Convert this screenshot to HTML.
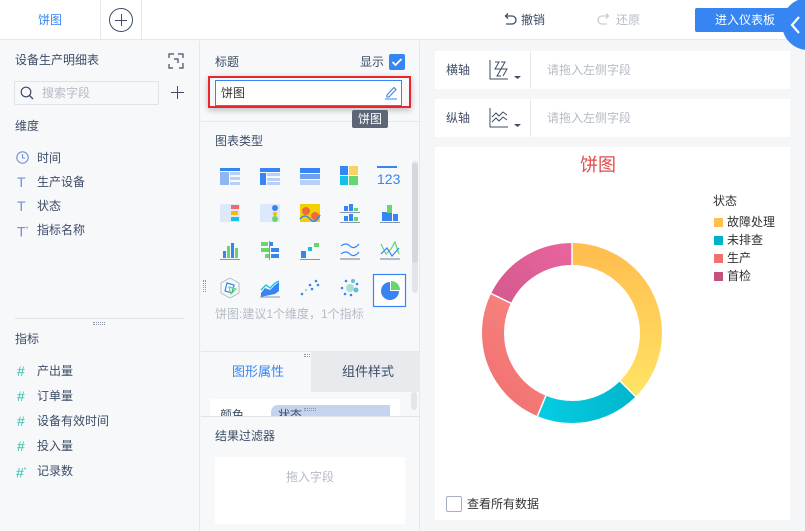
<!DOCTYPE html>
<html><head><meta charset="utf-8"><style>
*{margin:0;padding:0;box-sizing:border-box}
body{width:805px;height:531px;overflow:hidden;position:relative;background:#f5f6f8;font-family:"Liberation Sans","Noto Sans CJK SC",sans-serif;font-size:12px;color:#3d4d66}
.a{position:absolute;white-space:nowrap}
.t{line-height:16px}
</style></head><body>
<!-- top bar -->
<div class="a" style="left:0;top:0;width:805px;height:40px;background:#fff;border-bottom:1px solid #e6e8ec"></div>
<div class="a t" style="left:38px;top:12px;color:#3685f2">饼图</div>
<div class="a" style="left:100px;top:0;width:1px;height:40px;background:#e6e8ec"></div>
<div class="a" style="left:141px;top:0;width:1px;height:40px;background:#e6e8ec"></div>
<div class="a" style="left:109px;top:8px;width:24px;height:24px;border:1.2px solid #3d4d66;border-radius:50%"></div>
<div class="a" style="left:115px;top:19.5px;width:12px;height:1.3px;background:#3d4d66"></div>
<div class="a" style="left:120.5px;top:14px;width:1.3px;height:12px;background:#3d4d66"></div>
<svg class="a" style="left:502px;top:12px" width="16" height="16" viewBox="0 0 16 16"><path d="M4 4h6a4 4 0 0 1 0 8H4M6 1.5L3.5 4L6 6.5" fill="none" stroke="#3d4d66" stroke-width="1.3"/></svg>
<div class="a t" style="left:521px;top:12px;color:#3d4d66">撤销</div>
<svg class="a" style="left:596px;top:12px" width="16" height="16" viewBox="0 0 16 16"><path d="M12 4H6a4 4 0 0 0 0 8h5M10 1.5L12.5 4L10 6.5" fill="none" stroke="#c9ced6" stroke-width="1.3"/></svg>
<div class="a t" style="left:616px;top:12px;color:#b5bbc5">还原</div>
<div class="a" style="left:695px;top:8px;width:95px;height:24px;background:#3685f2;border-radius:2px;color:#fff;line-height:24px;text-indent:20px">进入仪表板</div>
<div class="a" style="left:782px;top:-2px;width:52px;height:52px;border-radius:50%;background:#3685f2"></div>
<svg class="a" style="left:789px;top:15px" width="14" height="20" viewBox="0 0 14 20"><path d="M10 2L3 10L10 18" fill="none" stroke="#fff" stroke-width="2.2"/></svg>

<!-- left panel -->
<div class="a" style="left:0;top:41px;width:200px;height:490px;background:#f7f8fa;border-right:1px solid #e6e8ec"></div>
<div class="a t" style="left:15px;top:52px">设备生产明细表</div>
<svg class="a" style="left:168px;top:53px" width="16" height="16" viewBox="0 0 16 16"><path d="M1 5V1h5M10 1h5v4M15 10v5h-4M5 15H1v-4M6 6h4v4" fill="none" stroke="#3d4d66" stroke-width="1.2"/></svg>
<div class="a" style="left:14px;top:81px;width:145px;height:24px;border:1px solid #dfe2e7;border-radius:2px;background:#f7f8fa"></div>
<svg class="a" style="left:20px;top:86px" width="14" height="14" viewBox="0 0 14 14"><circle cx="6" cy="6" r="4.8" fill="none" stroke="#3d4d66" stroke-width="1.2"/><path d="M9.5 9.5L13 13" stroke="#3d4d66" stroke-width="1.3"/></svg>
<div class="a t" style="left:42px;top:85px;color:#b5bbc5">搜索字段</div>
<div class="a" style="left:171px;top:92px;width:13px;height:1.4px;background:#3d4d66"></div>
<div class="a" style="left:177px;top:86px;width:1.4px;height:13px;background:#3d4d66"></div>
<div class="a t" style="left:15px;top:118px">维度</div>
<svg class="a" style="left:16px;top:151px" width="13" height="13" viewBox="0 0 13 13"><circle cx="6.5" cy="6.5" r="5.7" fill="none" stroke="#6f8fd8" stroke-width="1.1"/><path d="M6.5 3v4h2.5" fill="none" stroke="#6f8fd8" stroke-width="1.1"/></svg>
<div class="a t" style="left:37px;top:150px">时间</div>
<div class="a t" style="left:17px;top:174px;color:#6f8fd8;font-size:14px">T</div>
<div class="a t" style="left:37px;top:174px">生产设备</div>
<div class="a t" style="left:17px;top:198px;color:#6f8fd8;font-size:14px">T</div>
<div class="a t" style="left:37px;top:198px">状态</div>
<div class="a t" style="left:17px;top:222px;color:#6f8fd8;font-size:14px">T<sup style="font-size:7px">*</sup></div>
<div class="a t" style="left:37px;top:222px">指标名称</div>
<div class="a" style="left:15px;top:318px;width:169px;height:1px;background:#e1e3e8"></div>
<div class="a" style="left:93px;top:322px;width:12px;height:3px;border-top:1px dotted #8a94a6;border-bottom:1px dotted #8a94a6"></div>
<div class="a t" style="left:15px;top:331px">指标</div>
<div class="a t" style="left:17px;top:363px;color:#2dbfae;font-size:14px">#</div><div class="a t" style="left:37px;top:363px">产出量</div>
<div class="a t" style="left:17px;top:388px;color:#2dbfae;font-size:14px">#</div><div class="a t" style="left:37px;top:388px">订单量</div>
<div class="a t" style="left:17px;top:413px;color:#2dbfae;font-size:14px">#</div><div class="a t" style="left:37px;top:413px">设备有效时间</div>
<div class="a t" style="left:17px;top:438px;color:#2dbfae;font-size:14px">#</div><div class="a t" style="left:37px;top:438px">投入量</div>
<div class="a t" style="left:16px;top:463px;color:#2dbfae;font-size:14px">#<sup style="font-size:7px">*</sup></div><div class="a t" style="left:37px;top:463px">记录数</div>

<!-- middle panel -->
<div class="a" style="left:201px;top:41px;width:219px;height:490px;background:#f7f8fa;border-right:1px solid #e6e8ec"></div>
<div class="a t" style="left:215px;top:54px">标题</div>
<div class="a t" style="left:360px;top:54px">显示</div>
<div class="a" style="left:389px;top:54px;width:16px;height:16px;background:#3685f2;border-radius:2px"></div>
<svg class="a" style="left:389px;top:54px" width="16" height="16"><path d="M3.5 8l3 3l6-6" fill="none" stroke="#fff" stroke-width="1.8"/></svg>
<div class="a" style="left:201px;top:121px;width:219px;height:1px;background:#e6e8ec"></div>
<div class="a" style="left:208px;top:76px;width:203px;height:32px;border:2px solid #e8262b;box-shadow:0 2px 6px rgba(0,0,0,.25)"></div>
<div class="a" style="left:215px;top:80px;width:187px;height:26px;border:1px solid #3685f2;background:#fff"></div>
<div class="a t" style="left:221px;top:85px;color:#333">饼图</div>
<svg class="a" style="left:384px;top:84px" width="14" height="16" viewBox="0 0 14 16"><path d="M3 11L10 3.5l2 2L5 13H3zM1 15h12" fill="none" stroke="#3685f2" stroke-width="1.1"/></svg>
<div class="a" style="left:352px;top:110px;width:36px;height:18px;background:#5c6675;color:#fff;line-height:18px;text-align:center;border-radius:2px">饼图</div>
<div class="a t" style="left:215px;top:133px">图表类型</div>
<div class="a" style="left:412px;top:161px;width:6px;height:132px;background:#e3e5ea;border-radius:3px"></div>
<div class="a" style="left:412px;top:163px;width:6px;height:100px;background:#d4d7dd;border-radius:3px"></div>
<svg class="a" style="left:205px;top:160px" width="205" height="150">
<!-- row1 -->
<g transform="translate(15,8)"><rect width="20" height="3" fill="#3685f2"/><rect y="4" width="9" height="13" fill="#8fb6f0"/><rect x="10" y="4" width="10" height="3" fill="#b7d0f5"/><rect x="10" y="9" width="10" height="3" fill="#b7d0f5"/><rect x="10" y="14" width="10" height="3" fill="#b7d0f5"/></g>
<g transform="translate(55,8)"><rect width="20" height="4" fill="#3685f2"/><rect y="5" width="6" height="12" fill="#3685f2"/><rect x="7" y="5" width="13" height="3" fill="#b7d0f5"/><rect x="7" y="10" width="13" height="3" fill="#b7d0f5"/><rect x="7" y="14" width="13" height="3" fill="#b7d0f5"/></g>
<g transform="translate(95,8)"><rect width="20" height="5" fill="#3685f2"/><rect y="6" width="20" height="5" fill="#6ea0f0"/><rect y="12" width="20" height="5" fill="#b7d0f5"/></g>
<g transform="translate(135,6)"><rect width="8" height="9" fill="#3685f2"/><rect x="9" width="9" height="9" fill="#fbb800" opacity=".6"/><rect y="10" width="8" height="9" fill="#13c2e3"/><rect x="9" y="10" width="9" height="9" fill="#66d66f"/></g>
<text x="172" y="24" font-family="Liberation Sans" font-size="14" fill="#3685f2">123</text><rect x="172" y="6" width="20" height="2" fill="#3685f2"/>
<!-- row2 -->
<g transform="translate(15,44)"><rect width="20" height="18" fill="#dde8fa"/><rect x="11" y="1" width="8" height="4" fill="#f06a6a"/><rect x="11" y="7" width="7" height="4" fill="#fbb800"/><rect x="11" y="13" width="8" height="4" fill="#13c2e3"/></g>
<g transform="translate(55,44)"><rect width="20" height="18" fill="#dde8fa"/><circle cx="15" cy="4" r="3" fill="#3685f2"/><circle cx="15" cy="10" r="2" fill="#fbb800"/><circle cx="15" cy="15" r="3" fill="#66d66f"/></g>
<g transform="translate(95,44)"><rect width="20" height="18" fill="#f5d000"/><circle cx="6" cy="7" r="4" fill="#f06a3a"/><circle cx="15" cy="12" r="4" fill="#f06a3a"/><path d="M0 15q5-6 10 0t10-4" stroke="#3685f2" stroke-width="1.5" fill="none"/></g>
<g transform="translate(135,44)"><rect x="4" y="2" width="4" height="5" fill="#3685f2"/><rect x="9" width="4" height="7" fill="#3685f2"/><rect x="14" y="4" width="4" height="3" fill="#66d66f"/><rect y="8" width="20" height="1" fill="#8a94a6"/><rect x="4" y="12" width="4" height="5" fill="#3685f2"/><rect x="9" y="10" width="4" height="7" fill="#3685f2"/><rect x="14" y="13" width="4" height="4" fill="#66d66f"/><rect y="18" width="20" height="1" fill="#8a94a6"/></g>
<g transform="translate(175,44)"><rect x="2" y="8" width="5" height="9" fill="#3685f2"/><rect x="7" y="1" width="5" height="16" fill="#66d66f"/><rect x="7" y="9" width="5" height="8" fill="#3685f2"/><rect x="13" y="10" width="5" height="7" fill="#3685f2"/><rect y="18" width="20" height="1" fill="#8a94a6"/></g>
<!-- row3 -->
<g transform="translate(15,81)"><rect x="3" y="10" width="3" height="7" fill="#3685f2"/><rect x="7" y="5" width="3" height="12" fill="#66d66f"/><rect x="11" y="2" width="3" height="15" fill="#3685f2"/><rect x="15" y="7" width="3" height="10" fill="#66d66f"/><rect y="18" width="20" height="1" fill="#8a94a6"/></g>
<g transform="translate(55,81)"><rect x="1" y="1" width="7" height="4" fill="#66d66f"/><rect x="1" y="7" width="8" height="4" fill="#66d66f"/><rect x="10" y="1" width="3" height="4" fill="#3685f2"/><rect x="11" y="7" width="8" height="4" fill="#3685f2"/><rect x="11" y="13" width="8" height="4" fill="#3685f2"/><rect x="9" y="0" width="1" height="19" fill="#8a94a6"/><rect x="5" y="13" width="4" height="4" fill="#66d66f"/></g>
<g transform="translate(95,81)"><rect x="1" y="10" width="5" height="7" fill="#3685f2"/><rect x="8" y="6" width="4" height="4" fill="#13c2e3"/><rect x="14" y="2" width="5" height="4" fill="#66d66f"/><rect y="18" width="20" height="1" fill="#8a94a6"/></g>
<g transform="translate(135,81)" fill="none" stroke="#3685f2" stroke-width="1.2"><path d="M1 5q5-4 9 0t9-2"/><path d="M1 13q5-4 9 0t9-2"/><path d="M0 18h20" stroke="#8a94a6"/></g>
<g transform="translate(175,81)" fill="none" stroke-width="1.2"><path d="M1 3l5 10 5-5 4-7 4 12" stroke="#66d66f"/><path d="M1 13l6-6 5 8 7-8" stroke="#3685f2"/><path d="M0 18h20" stroke="#8a94a6"/></g>
<!-- row4 -->
<g transform="translate(15,118)"><polygon points="10,0 19,5 19,15 10,20 1,15 1,5" fill="none" stroke="#b5bbc5" stroke-width="1"/><polygon points="7,5 14,7 12,15 5,13" fill="none" stroke="#3685f2" stroke-width="1.2"/><polygon points="9,9 16,11 11,16" fill="none" stroke="#66d66f" stroke-width="1.2"/></g>
<g transform="translate(55,118)"><path d="M1 15l4-5 5 2 5-5 4-3v9l-4 3-5 1-5 1-4 1z" fill="#3685f2"/><path d="M1 12l5-5 4 3 5-5 4-2" fill="none" stroke="#13c2e3" stroke-width="1.3"/><path d="M0 19h20" stroke="#8a94a6"/></g>
<g transform="translate(95,118)" fill="#3685f2"><circle cx="2" cy="16" r="1.3"/><circle cx="6" cy="12" r="1.3" fill="#9ee0c8"/><circle cx="10" cy="7" r="1.3"/><circle cx="12" cy="11" r="1.3"/><circle cx="16" cy="3" r="1.3"/><circle cx="18" cy="7" r="1.3"/></g>
<g transform="translate(135,118)"><circle cx="10" cy="10" r="4" fill="#a8e0d0"/><circle cx="16" cy="12" r="2.5" fill="#66bcd8"/><circle cx="13" cy="3" r="2" fill="#66bcd8"/><circle cx="6" cy="3" r="1.3" fill="#3685f2"/><circle cx="2" cy="10" r="1.3" fill="#3685f2"/><circle cx="5" cy="16" r="1.3" fill="#3685f2"/><circle cx="11" cy="17" r="1.3" fill="#3685f2"/><circle cx="17" cy="6" r="1.3" fill="#3685f2"/></g>
<rect x="168.5" y="114.5" width="32" height="32" fill="#fff" stroke="#3685f2" stroke-width="1.2"/>
<g transform="translate(185,131)"><path d="M0-9A9 9 0 1 0 9 0H0z" fill="#3685f2"/><path d="M1-10A9 9 0 0 1 10-1H1z" fill="#66d66f"/></g>
</svg>
<div class="a" style="left:203px;top:280px;width:3px;height:12px;border-left:1px dotted #8a94a6;border-right:1px dotted #8a94a6"></div>
<div class="a t" style="left:215px;top:306px;color:#b5bbc5">饼图:建议1个维度，1个指标</div>
<div class="a" style="left:201px;top:351px;width:219px;height:1px;background:#e6e8ec"></div>
<div class="a" style="left:304px;top:354px;width:12px;height:3px;border-top:1px dotted #8a94a6;border-bottom:1px dotted #8a94a6"></div>
<div class="a" style="left:311px;top:352px;width:109px;height:40px;background:#e8eaee"></div>
<div class="a t" style="left:232px;top:364px;color:#3685f2;font-size:13px">图形属性</div>
<div class="a t" style="left:342px;top:364px;font-size:13px">组件样式</div>
<div class="a" style="left:210px;top:399px;width:190px;height:17px;background:#fff;overflow:hidden"><div class="a t" style="left:10px;top:8px">颜色</div><div class="a" style="left:61px;top:6px;width:119px;height:14px;background:#c5d3ec;border-radius:7px 0 0 0"></div><div class="a t" style="left:68px;top:8px">状态</div></div>
<div class="a" style="left:411px;top:392px;width:6px;height:18px;background:#e3e5ea;border-radius:3px"></div>
<div class="a" style="left:201px;top:416px;width:219px;height:1px;background:#e1e3e8"></div>
<div class="a" style="left:304px;top:408px;width:12px;height:3px;border-top:1px dotted #8a94a6;border-bottom:1px dotted #8a94a6"></div>
<div class="a t" style="left:215px;top:428px">结果过滤器</div>
<div class="a" style="left:215px;top:457px;width:190px;height:67px;background:#fff"></div>
<div class="a t" style="left:286px;top:469px;color:#b5bbc5">拖入字段</div>

<!-- right -->
<div class="a" style="left:435px;top:51px;width:355px;height:38px;background:#fff"></div>
<div class="a" style="left:435px;top:99px;width:355px;height:38px;background:#fff"></div>
<div class="a" style="left:530px;top:51px;width:1px;height:38px;background:#e6e8ec"></div>
<div class="a" style="left:530px;top:99px;width:1px;height:38px;background:#e6e8ec"></div>
<div class="a t" style="left:446px;top:62px">横轴</div>
<div class="a t" style="left:446px;top:110px">纵轴</div>
<div class="a t" style="left:547px;top:62px;color:#b5bbc5">请拖入左侧字段</div>
<div class="a t" style="left:547px;top:110px;color:#b5bbc5">请拖入左侧字段</div>
<svg class="a" style="left:489px;top:60px" width="34" height="20"><path d="M1 0v19h18M6 2h4l-4 7 6 0-4 7h4M12 2h4l-4 7 6 0-4 7" fill="none" stroke="#3d4d66" stroke-width="1"/><path d="M25 16h7l-3.5 3z" fill="#3d4d66"/></svg>
<svg class="a" style="left:489px;top:108px" width="34" height="20"><path d="M1 0v19h18M3 9l4-4 3 3 4-4 4 3M3 14l4-4 3 3 4-4 4 3" fill="none" stroke="#3d4d66" stroke-width="1"/><path d="M25 16h7l-3.5 3z" fill="#3d4d66"/></svg>
<div class="a" style="left:435px;top:147px;width:355px;height:373px;background:#fff"></div>
<div class="a" style="left:580px;top:154px;color:#e04a4a;font-size:18px;line-height:22px">饼图</div>
<svg class="a" style="left:472px;top:233px" width="200" height="200" viewBox="0 0 200 200">
<defs>
<linearGradient id="gy" x1="0" y1="0" x2="1" y2="0"><stop offset="0" stop-color="#ffe866"/><stop offset="1" stop-color="#ffbf50"/></linearGradient>
<linearGradient id="gc" x1="0" y1="0" x2="0" y2="1"><stop offset="0" stop-color="#08d8ee"/><stop offset="1" stop-color="#00b2c8"/></linearGradient>
<linearGradient id="gp" x1="0" y1="0" x2="1" y2="1"><stop offset="0" stop-color="#f07070"/><stop offset="1" stop-color="#ff9a90"/></linearGradient>
<linearGradient id="gm" x1="0" y1="0" x2="1" y2="1"><stop offset="0" stop-color="#c2517e"/><stop offset="1" stop-color="#f46aa8"/></linearGradient>
</defs>
<g transform="rotate(-90 100 100)" fill="none" stroke-width="22">
<circle cx="100" cy="100" r="79" stroke="url(#gy)" stroke-dasharray="186.1 400"/>
<circle cx="100" cy="100" r="79" stroke="url(#gc)" stroke-dasharray="0 186.1 93.2 400"/>
<circle cx="100" cy="100" r="79" stroke="url(#gp)" stroke-dasharray="0 279.3 128.8 400"/>
<circle cx="100" cy="100" r="79" stroke="url(#gm)" stroke-dasharray="0 408.1 88.3 400"/>
</g>
<g stroke="#fff" stroke-width="1.5"><line x1="100" y1="100" x2="100" y2="5" transform="rotate(0 100 100)"/><line x1="100" y1="32" x2="100" y2="5" transform="rotate(135 100 100)"/><line x1="100" y1="32" x2="100" y2="5" transform="rotate(202.6 100 100)"/><line x1="100" y1="32" x2="100" y2="5" transform="rotate(296 100 100)"/></g>
<circle cx="100" cy="100" r="67.5" fill="#fff"/>
</svg>
<div class="a t" style="left:713px;top:193px;color:#333">状态</div>
<div class="a" style="left:714px;top:218px;width:9px;height:9px;background:#ffbf50"></div><div class="a t" style="left:727px;top:214px;color:#333">故障处理</div>
<div class="a" style="left:714px;top:236px;width:9px;height:9px;background:#00b2c8"></div><div class="a t" style="left:727px;top:232px;color:#333">未排查</div>
<div class="a" style="left:714px;top:254px;width:9px;height:9px;background:#f07070"></div><div class="a t" style="left:727px;top:250px;color:#333">生产</div>
<div class="a" style="left:714px;top:272px;width:9px;height:9px;background:#c2517e"></div><div class="a t" style="left:727px;top:268px;color:#333">首检</div>
<div class="a" style="left:446px;top:496px;width:16px;height:16px;border:1px solid #a8b0bd;border-radius:2px;background:#fff"></div>
<div class="a t" style="left:467px;top:496px;color:#333">查看所有数据</div>
</body></html>
